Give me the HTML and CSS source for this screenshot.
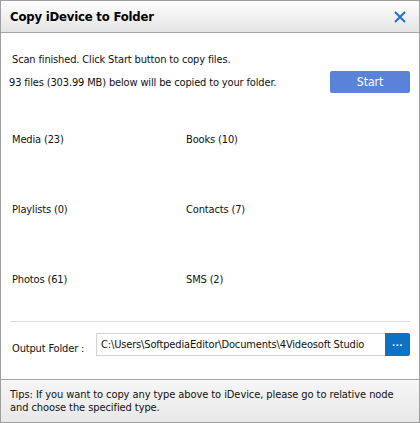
FILE: index.html
```html
<!DOCTYPE html>
<html lang="en">
<head>
  <meta charset="UTF-8" />
  <meta name="viewport" content="width=device-width, initial-scale=1.0" />
  <title>Copy iDevice to Folder</title>
  <link rel="stylesheet" href="styles.css">
</head>
<body>
  <div class="window">
    <div class="titlebar">
      <h1>Copy iDevice to Folder</h1>
      <button class="close-button" title="Close">
        <svg width="12" height="12" viewBox="0 0 12 12">
          <path d="M1 1 L11 11 M11 1 L1 11" stroke="#1f6fd8" stroke-width="2" fill="none"/>
        </svg>
      </button>
    </div>

    <div class="main">
      <p class="status">Scan finished. Click Start button to copy files.</p>
      <div class="summary">
        <span>93 files (303.99 MB) below will be copied to your folder.</span>
        <button class="start-button">Start</button>
      </div>

      <div class="category-list" id="categoryList"></div>

      <div class="separator"></div>

      <div class="output-row">
        <label for="outputPath">Output Folder :</label>
        <input type="text" id="outputPath" value="C:\Users\SoftpediaEditor\Documents\4Videosoft Studio">
        <button class="browse-button">&middot;&middot;&middot;</button>
      </div>
    </div>

    <div class="tips">
      Tips: If you want to copy any type above to iDevice, please go to relative node and choose the specified type.
    </div>
  </div>

  <script>
    const categories = [
      { name: "Media", count: 23 },
      { name: "Books", count: 10 },
      { name: "Playlists", count: 0 },
      { name: "Contacts", count: 7 },
      { name: "Photos", count: 61 },
      { name: "SMS", count: 2 }
    ];

    const list = document.getElementById('categoryList');
    categories.forEach(cat => {
      const item = document.createElement('div');
      item.className = 'category';
      item.textContent = `${cat.name} (${cat.count})`;
      list.appendChild(item);
    });
  </script>
</body>
</html>
```

FILE: styles.css
```css
body {
  font-family: "DejaVu Sans", Tahoma, sans-serif;
  font-stretch: condensed;
  font-size: 11px;
  letter-spacing: -0.15px;
  color: #111;
  margin: 0;
  padding: 0;
  background: #fff;
}
.window {
  width: 420px;
  height: 423px;
  box-sizing: border-box;
  border: 1px solid #9e9e9e;
  display: flex;
  flex-direction: column;
  background: #fff;
}
.titlebar {
  height: 31px;
  border-bottom: 1px solid #a6a6a6;
  background: linear-gradient(#fefefe, #e4e4e4);
  display: flex;
  align-items: center;
  justify-content: space-between;
  padding: 0 13px 0 9px;
}
.titlebar h1 {
  margin: 0;
  font-size: 13px;
  font-weight: bold;
  letter-spacing: -0.2px;
  color: #000;
}
.close-button {
  border: none;
  background: none;
  padding: 0;
  width: 12px;
  height: 12px;
  display: flex;
  cursor: pointer;
}
.main {
  flex: 1;
  padding: 0 9px 0 8px;
}
.status {
  margin: 20px 0 0 3px;
  line-height: 14px;
}
.summary {
  margin-top: 4px;
  display: flex;
  align-items: center;
  justify-content: space-between;
}
.start-button {
  width: 80px;
  height: 22px;
  border: none;
  border-radius: 2px;
  background: #5883d8;
  color: #fff;
  font-family: inherit;
  font-stretch: condensed;
  font-size: 12px;
  cursor: pointer;
}
.category-list {
  display: grid;
  grid-template-columns: 174px 1fr;
  grid-template-rows: 70px 70px 14px;
  margin-top: 40px;
  padding-left: 3px;
}
.category {
  line-height: 14px;
}
.separator {
  margin-top: 34px;
  margin-left: 1px;
  height: 1px;
  background: #dcdcdc;
}
.output-row {
  margin-top: 11px;
  display: flex;
  align-items: center;
}
.output-row label {
  width: 84px;
  padding-left: 3px;
  padding-top: 8px;
}
.output-row input {
  width: 289px;
  height: 23px;
  box-sizing: border-box;
  border: 1px solid #d2d2d2;
  border-right: none;
  padding: 0 4px;
  font-family: inherit;
  font-stretch: condensed;
  font-size: 11px;
  letter-spacing: -0.15px;
  color: #111;
  outline: none;
}
.browse-button {
  width: 25px;
  height: 23px;
  border: none;
  border-radius: 0 2px 2px 0;
  background: #0b72c4;
  color: #fff;
  font-weight: bold;
  font-size: 11px;
  padding: 0;
  cursor: pointer;
}
.tips {
  height: 43px;
  box-sizing: border-box;
  border-top: 1px solid #a6a6a6;
  background: linear-gradient(#f6f6f6, #e8e8e8);
  padding: 8px 9px 0 9px;
  line-height: 13px;
  letter-spacing: -0.08px;
}
```
